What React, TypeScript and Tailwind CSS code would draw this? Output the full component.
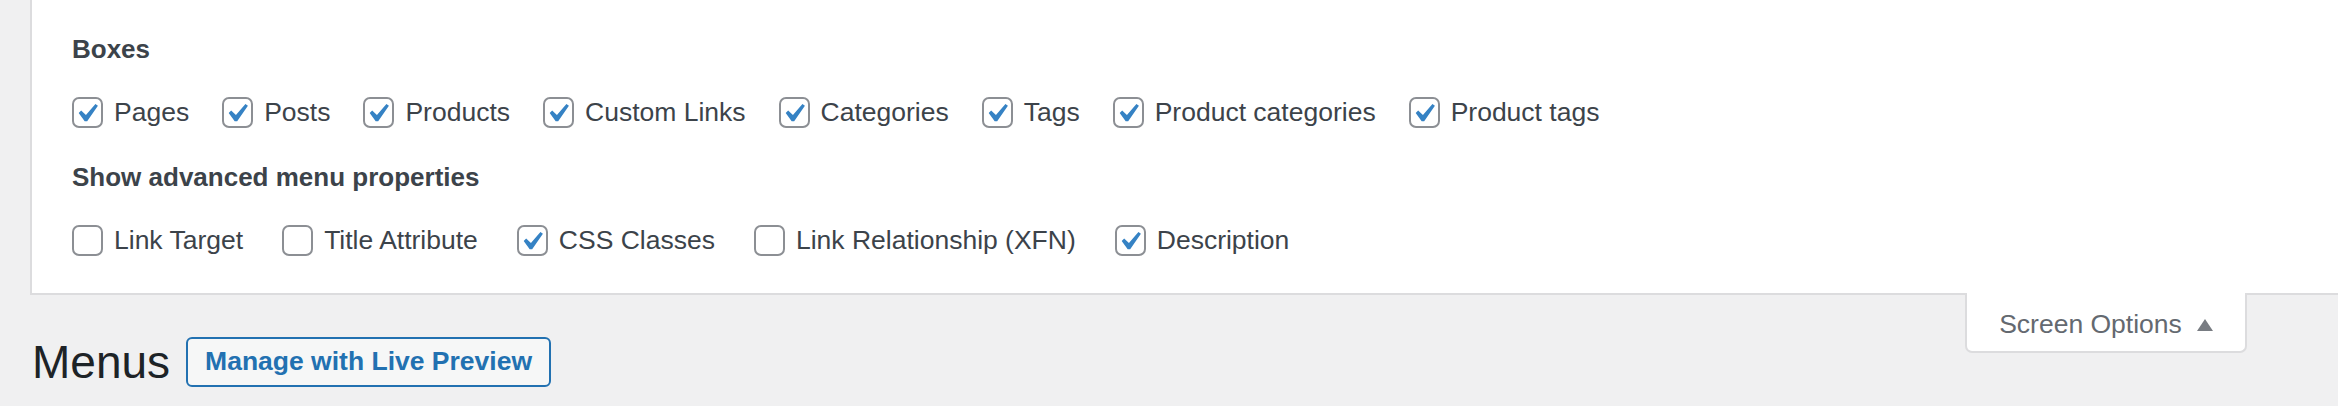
import React from "react";

const boxes = [
    { label: "Pages", checked: true },
    { label: "Posts", checked: true },
    { label: "Products", checked: true },
    { label: "Custom Links", checked: true },
    { label: "Categories", checked: true },
    { label: "Tags", checked: true },
    { label: "Product categories", checked: true },
    { label: "Product tags", checked: true },
];

const advanced = [
    { label: "Link Target", checked: false },
    { label: "Title Attribute", checked: false },
    { label: "CSS Classes", checked: true },
    { label: "Link Relationship (XFN)", checked: false },
    { label: "Description", checked: true },
];

function Checkbox({ checked }: { checked: boolean }) {
    return (
        <span className="relative block w-[31px] h-[31px] shrink-0 rounded-[7px] border-2 border-[#8c8f94] bg-white">
            {checked && (
                <svg
                    viewBox="0 0 20 20"
                    className="absolute left-[-6px] top-[-4px] w-[37px] h-[37px]"
                >
                    <path
                        d="M14.83 4.89l1.34.94-5.81 8.38H9.02L5.78 9.67l1.34-1.25 2.57 2.4z"
                        fill="#3582c4"
                    />
                </svg>
            )}
        </span>
    );
}

function Option({ label, checked }: { label: string; checked: boolean }) {
    return (
        <label className="flex items-center gap-[11px] text-[26.5px] text-[#3c434a]">
            <Checkbox checked={checked} />
            <span className="pt-[2px]">{label}</span>
        </label>
    );
}

export default function App() {
    return (
        <div className="h-[406px] w-full overflow-hidden bg-[#f0f0f1] font-['Liberation_Sans',Arial,sans-serif]">
            <div className="ml-[30px] bg-white border-l-2 border-b-2 border-[#dcdcde] pl-[40px] pt-[29px] pb-[33px]">
                <h5 className="h-[40px] leading-[40px] text-[26px] font-bold text-[#3c434a]">Boxes</h5>
                <div className="mt-[23px] flex h-[40px] items-center gap-[33px]">
                    {boxes.map((b) => (
                        <Option key={b.label} label={b.label} checked={b.checked} />
                    ))}
                </div>
                <h5 className="mt-[25px] h-[40px] leading-[40px] text-[26px] font-bold text-[#3c434a]">
                    Show advanced menu properties
                </h5>
                <div className="mt-[23px] flex h-[40px] items-center gap-[39px]">
                    {advanced.map((b) => (
                        <Option key={b.label} label={b.label} checked={b.checked} />
                    ))}
                </div>
            </div>

            <div className="flex items-start justify-between">
                <div className="flex items-center gap-[16px] pl-[32px] pt-[42px]">
                    <h1 className="text-[46px] leading-[50px] text-[#1d2327]">Menus</h1>
                    <button className="h-[50px] rounded-[6px] border-2 border-[#2271b1] bg-[#f6f7f7] px-[17px] text-[26.5px] font-bold text-[#2271b1]">
                        Manage with Live Preview
                    </button>
                </div>
                <button className="relative mt-[-2px] mr-[91px] flex h-[60px] w-[282px] items-center justify-center gap-[15px] rounded-b-[7px] border-2 border-t-0 border-[#dcdcde] bg-white pt-[6px] text-[26.5px] text-[#646970]">
                    <span>Screen Options</span>
                    <svg viewBox="0 0 16 12" className="w-[16px] h-[12px]">
                        <path d="M8 0L16 12H0z" fill="#787c82" />
                    </svg>
                </button>
            </div>
        </div>
    );
}
